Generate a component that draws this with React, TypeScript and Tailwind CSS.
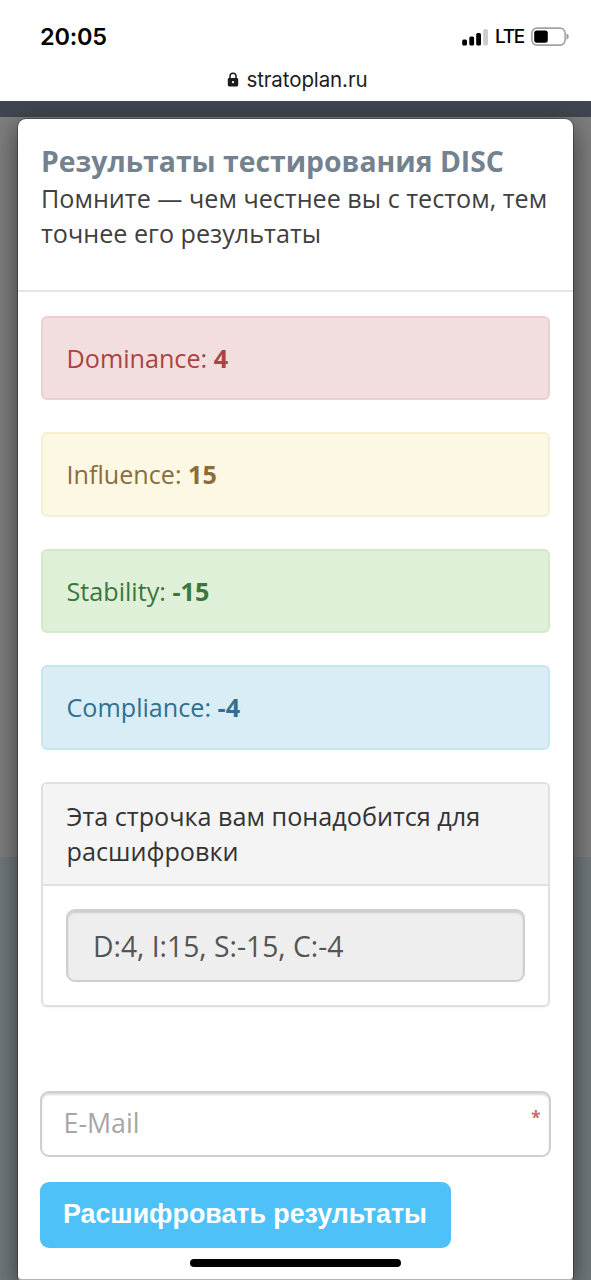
import React from "react";

type Score = { label: string; value: number; tone: string };

const scores: Score[] = [
  { label: "Dominance", value: 4, tone: "bg-[#f2dede] border-[#ecced3] text-[#a94442]" },
  { label: "Influence", value: 15, tone: "bg-[#fcf8e3] border-[#faeed2] text-[#8a6d3b]" },
  { label: "Stability", value: -15, tone: "bg-[#dff0d8] border-[#d4e9c8] text-[#3c763d]" },
  { label: "Compliance", value: -4, tone: "bg-[#d9edf7] border-[#c2e9f2] text-[#31708f]" },
];

function StatusBar() {
  return (
    <div className="flex h-[60px] items-start justify-between pl-[40px] pr-[22px] pt-[22px] font-['Inter',sans-serif] text-black">
      <span className="text-[23.5px] font-semibold leading-[30px] tracking-[-0.2px]">20:05</span>
      <div className="flex h-[30px] items-center">
        <svg width="28" height="18" viewBox="0 0 28 18" className="mr-[5px]">
          <rect x="0.2" y="11.5" width="4.800" height="6" rx="1.5" />
          <rect x="7.3" y="8.4" width="4.800" height="9.1" rx="1.5" />
          <rect x="14.2" y="5" width="4.800" height="12.5" rx="1.5" />
          <rect x="21.2" y="1" width="4.800" height="16.5" rx="1.5" fill="#cdcdcd" />
        </svg>
        <span className="text-[19px] font-medium leading-[30px] tracking-[-1.3px]">LTE</span>
        <svg width="38" height="20" viewBox="0 0 38 20" className="ml-[7px]">
          <rect x="0.900" y="1.1" width="33.200" height="17" rx="5" fill="none" stroke="#a3a3a3" strokeWidth="1.6" />
          <rect x="3.2" y="3.5" width="13.6" height="12.2" rx="2.6" />
          <path d="M35.500 6.5c1.6.6 2.2 1.8 2.2 3.1s-.6 2.500-2.200 3.100z" fill="#9a9a9a" />
        </svg>
      </div>
    </div>
  );
}

function AddressBar() {
  return (
    <div className="flex h-[41px] items-start justify-center pl-[4px] font-['Inter',sans-serif] text-[#1c1c1e]">
      <svg width="12" height="16" viewBox="0 0 12 16" className="mr-[7px] mt-[12px]">
        <path d="M3 7V4.200a3 3 0 0 1 6 0V7" fill="none" stroke="#1c1c1e" strokeWidth="1.500" />
        <rect x="0.800" y="6" width="10.400" height="8.500" rx="1.400" fill="#1c1c1e" />
        <circle cx="6" cy="10.200" r="1.100" fill="#fff" />
      </svg>
      <span className="mt-[5px] text-[20.5px] leading-[30px] tracking-[-0.1px]">stratoplan.ru</span>
    </div>
  );
}

export default function App() {
  return (
    <div className="flex h-[1280px] w-[591px] flex-col overflow-hidden bg-white">
      <StatusBar />
      <AddressBar />
      <div className="grid h-[1179px] grid-cols-1 grid-rows-1 overflow-hidden">
        <div className="col-start-1 row-start-1 flex flex-col">
          <div className="h-[16px] bg-[#3e464f]" />
          <div className="h-[740px] bg-[#7d7d7d]" />
          <div className="flex-1 bg-[#70777a]" />
        </div>
        <main className="z-10 col-start-1 row-start-1 mx-[17px] mt-[17px] flex flex-col rounded-t-[9px] rounded-b-[4px] border border-black/30 border-b-[#b5b5b5] bg-white bg-clip-padding font-['Open_Sans',sans-serif] shadow-[0_8px_24px_rgba(0,0,0,0.5)]">
          <header className="h-[173px] border-b-2 border-[#e5e5e5] px-[23px] pt-[25px]">
            <h1 className="whitespace-nowrap text-[28.35px] font-bold leading-[34px] text-[#74828f]">Результаты тестирования DISC</h1>
            <p className="mt-[3px] whitespace-nowrap text-[25.170px] leading-[35px] text-[#404040]">
              Помните — чем честнее вы с тестом, тем
              <br />
              точнее его результаты
            </p>
          </header>
          <div className="flex flex-col pl-[22.500px] pr-[23.500px] pt-[23.500px]">
            <div className="flex flex-col gap-[32px]">
              {scores.map((s) => (
                <div key={s.label} className={`flex h-[84.500px] items-center rounded-[6px] border-2 pl-[24px] pt-[2px] text-[25.170px] ${s.tone}`}>
                  <span>
                    {s.label}: <b className="font-bold">{s.value}</b>
                  </span>
                </div>
              ))}
            </div>
            <section className="mt-[32px] h-[225px] rounded-[6px] border-2 border-[#e0e0e0] shadow-[0_1px_2px_rgba(0,0,0,0.05)]">
              <div className="h-[102px] rounded-t-[4px] border-b-2 border-[#e0e0e0] bg-[#f4f4f4] pl-[24px] pt-[15.500px] text-[25.200px] leading-[35px] text-[#333333]">
                Эта строчка вам понадобится для
                <br />
                расшифровки
              </div>
              <div className="pl-[23.500px] pr-[23px] pt-[23.500px]">
                <div className="flex h-[73px] items-center rounded-[9px] border-2 border-[#cfcfcf] bg-[#eeeeee] pl-[25px] pt-[2px] text-[28.250px] text-[#555555] shadow-[inset_0_2px_2px_rgba(0,0,0,0.14)]">
                  D:4, I:15, S:-15, C:-4
                </div>
              </div>
            </section>
          </div>
          <form className="flex flex-col items-start pl-[21.500px] pr-[22.500px] pt-[84px]">
            <div className="flex h-[66px] w-full justify-between rounded-[9px] border-2 border-[#cfcfcf] bg-white pl-[22px] pr-[8px] shadow-[inset_0_2px_2px_rgba(0,0,0,0.14)]">
              <span className="mt-[12px] text-[26.800px] leading-[35px] text-[#a6a6a6]">E-Mail</span>
              <span className="mt-[12px] text-[17px] font-bold leading-[26px] text-[#d0676c]">*</span>
            </div>
            <button type="button" className="mt-[25px] h-[66px] w-[411px] rounded-[9px] bg-[#4fc1f9] pb-[1px] font-['Liberation_Sans',sans-serif] text-[26.800px] font-bold whitespace-nowrap text-white">
              Расшифровать результаты
            </button>
          </form>
          <div className="mt-[11px] h-[8px] w-[211px] self-center rounded-full bg-black" />
        </main>
      </div>
    </div>
  );
}
